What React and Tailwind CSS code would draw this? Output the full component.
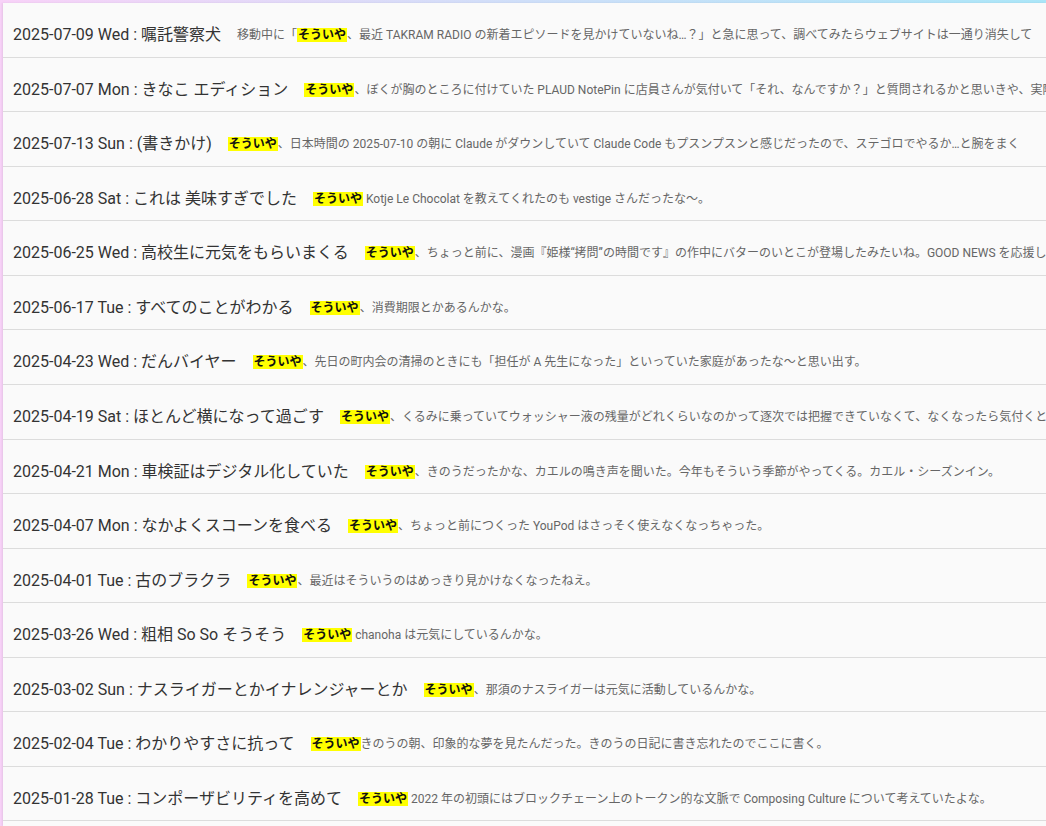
import React from "react";

const posts = [
  { date: "2025-07-09 Wed", title: "嘱託警察犬", pre: "移動中に「", rest: "、最近 TAKRAM RADIO の新着エピソードを見かけていないね…？」と急に思って、調べてみたらウェブサイトは一通り消失して" },
  { date: "2025-07-07 Mon", title: "きなこ エディション", rest: "、ぼくが胸のところに付けていた PLAUD NotePin に店員さんが気付いて「それ、なんですか？」と質問されるかと思いきや、実際" },
  { date: "2025-07-13 Sun", title: "(書きかけ)", rest: "、日本時間の 2025-07-10 の朝に Claude がダウンしていて Claude Code もプスンプスンと感じだったので、ステゴロでやるか…と腕をまく" },
  { date: "2025-06-28 Sat", title: "これは 美味すぎでした", rest: " Kotje Le Chocolat を教えてくれたのも vestige さんだったな〜。" },
  { date: "2025-06-25 Wed", title: "高校生に元気をもらいまくる", rest: "、ちょっと前に、漫画『姫様“拷問”の時間です』の作中にバターのいとこが登場したみたいね。GOOD NEWS を応援して" },
  { date: "2025-06-17 Tue", title: "すべてのことがわかる", rest: "、消費期限とかあるんかな。" },
  { date: "2025-04-23 Wed", title: "だんバイヤー", rest: "、先日の町内会の清掃のときにも「担任が A 先生になった」といっていた家庭があったな〜と思い出す。" },
  { date: "2025-04-19 Sat", title: "ほとんど横になって過ごす", rest: "、くるみに乗っていてウォッシャー液の残量がどれくらいなのかって逐次では把握できていなくて、なくなったら気付くと" },
  { date: "2025-04-21 Mon", title: "車検証はデジタル化していた", rest: "、きのうだったかな、カエルの鳴き声を聞いた。今年もそういう季節がやってくる。カエル・シーズンイン。" },
  { date: "2025-04-07 Mon", title: "なかよくスコーンを食べる", rest: "、ちょっと前につくった YouPod はさっそく使えなくなっちゃった。" },
  { date: "2025-04-01 Tue", title: "古のブラクラ", rest: "、最近はそういうのはめっきり見かけなくなったねえ。" },
  { date: "2025-03-26 Wed", title: "粗相 So So そうそう", rest: " chanoha は元気にしているんかな。" },
  { date: "2025-03-02 Sun", title: "ナスライガーとかイナレンジャーとか", rest: "、那須のナスライガーは元気に活動しているんかな。" },
  { date: "2025-02-04 Tue", title: "わかりやすさに抗って", rest: "きのうの朝、印象的な夢を見たんだった。きのうの日記に書き忘れたのでここに書く。" },
  { date: "2025-01-28 Tue", title: "コンポーザビリティを高めて", rest: " 2022 年の初頭にはブロックチェーン上のトークン的な文脈で Composing Culture について考えていたよな。" },
];

function Row({ post }) {
  return (
    <li className="h-[54.57px] border-b border-[#dcdcdc] pl-[10px] pt-[20px] flex items-start whitespace-nowrap">
      <span className="text-[16px] leading-[24px] text-[#333]">
        {post.date} : {post.title}
      </span>
      <span className="ml-[16px] mt-[3px] text-[12px] leading-[18px] text-[#666]">
        {post.pre}
        <mark className="bg-[#ffff00] font-bold text-[#111] px-[1px]">そういや</mark>
        {post.rest}
      </span>
    </li>
  );
}

export default function App() {
  return (
    <div
      className="h-[826px] overflow-hidden bg-gradient-to-r from-[#f8d2f8] via-[#cfdff9] to-[#abe6f8] pl-[3px] pt-[3px]"
      style={{ fontFamily: "Roboto, 'Noto Sans CJK JP', sans-serif" }}
    >
      <ul className="bg-[#fafafa] h-full overflow-hidden shadow-[-1px_0_2px_rgba(0,0,0,0.08)]">
        {posts.map((p) => (
          <Row key={p.date + p.title} post={p} />
        ))}
      </ul>
    </div>
  );
}
